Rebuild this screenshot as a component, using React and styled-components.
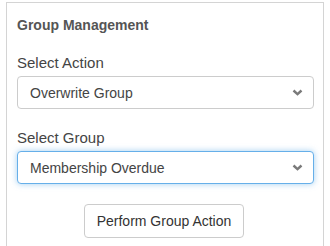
import React from 'react';
import styled, { createGlobalStyle } from 'styled-components';

const GlobalStyle = createGlobalStyle`
  body {
    margin: 0;
    background: #fff;
    font-family: "Liberation Sans", Arial, sans-serif;
    overflow: hidden;
  }
`;

const Panel = styled.div`
  margin: 2px 0 0 6px;
  width: 318px;
  height: 244px;
  border: 1px solid #d4d4d4;
  border-bottom: none;
  padding: 14px 10px 0 10px;
  box-sizing: border-box;
`;

const Title = styled.h3`
  margin: 0;
  font-size: 14px;
  line-height: 17px;
  font-weight: bold;
  color: #555;
`;

const Field = styled.div`
  margin-top: ${(p) => p.$top}px;
  display: flex;
  flex-direction: column;
  gap: 3px;
`;

const Label = styled.label`
  font-size: 15px;
  line-height: 20px;
  color: #444;
`;

const SelectWrap = styled.div`
  position: relative;
  width: 297px;
`;

const Select = styled.select`
  appearance: none;
  width: 100%;
  height: 33px;
  padding: 0 30px 0 12px;
  font-family: "Liberation Sans", Arial, sans-serif;
  font-size: 14px;
  color: #444;
  background: #fff;
  border: 1px solid ${(p) => (p.$focused ? '#66afe9' : '#ccc')};
  border-radius: 4px;
  box-shadow: ${(p) =>
    p.$focused ? '0 0 6px rgba(102, 175, 233, 0.6)' : 'none'};
  outline: none;
`;

const Chevron = styled.svg`
  position: absolute;
  right: 11px;
  top: 13px;
  pointer-events: none;
`;

const Actions = styled.div`
  display: flex;
  justify-content: center;
  margin-top: 20px;
  padding-right: 2px;
`;

const Button = styled.button`
  width: 160px;
  height: 34px;
  font-family: "Liberation Sans", Arial, sans-serif;
  font-size: 14px;
  color: #333;
  background: #fff;
  border: 1px solid #ccc;
  border-radius: 4px;
`;

function Dropdown({ value, options, focused }) {
  return (
    <SelectWrap>
      <Select value={value} onChange={() => {}} $focused={focused}>
        {options.map((o) => (
          <option key={o}>{o}</option>
        ))}
      </Select>
      <Chevron width="11" height="7" viewBox="0 0 11 7">
        <polyline
          points="1.5,1.5 5.5,5.2 9.5,1.5"
          fill="none"
          stroke="#7a7a7a"
          strokeWidth="2.4"
        />
      </Chevron>
    </SelectWrap>
  );
}

export default function App() {
  return (
    <>
      <GlobalStyle />
      <Panel>
        <Title>Group Management</Title>
        <Field $top={19}>
          <Label>Select Action</Label>
          <Dropdown
            value="Overwrite Group"
            options={['Overwrite Group', 'Add to Group', 'Remove from Group']}
          />
        </Field>
        <Field $top={19}>
          <Label>Select Group</Label>
          <Dropdown
            value="Membership Overdue"
            options={['Membership Overdue', 'Active Members', 'New Members']}
            focused
          />
        </Field>
        <Actions>
          <Button>Perform Group Action</Button>
        </Actions>
      </Panel>
    </>
  );
}
